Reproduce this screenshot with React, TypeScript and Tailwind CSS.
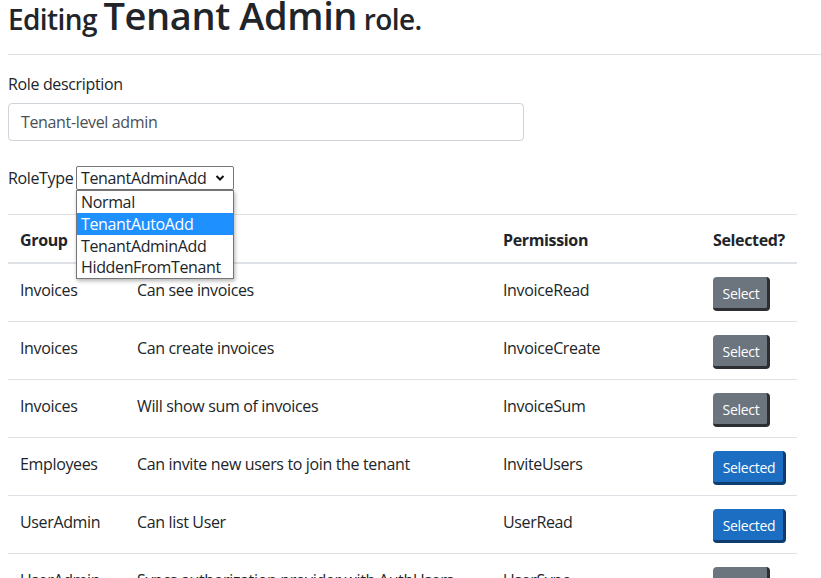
import React from "react";

const rows = [
  { g: "Invoices", d: "Can see invoices", p: "InvoiceRead", s: false },
  { g: "Invoices", d: "Can create invoices", p: "InvoiceCreate", s: false },
  { g: "Invoices", d: "Will show sum of invoices", p: "InvoiceSum", s: false },
  { g: "Employees", d: "Can invite new users to join the tenant", p: "InviteUsers", s: true },
  { g: "UserAdmin", d: "Can list User", p: "UserRead", s: true },
  { g: "UserAdmin", d: "Syncs authorization provider with AuthUsers", p: "UserSync", s: false },
];

export default function App() {
  return (
    <div
      className="h-[578px] w-[821px] overflow-hidden bg-white pl-2 text-[#212529]"
      style={{ fontFamily: '"Segoe UI", "Open Sans", "Noto Sans", sans-serif' }}
    >
      <h1 className="text-[28px] font-semibold leading-[30px] tracking-[-0.6px]">
        Editing <span className="text-[38px] tracking-[-0.4px]">Tenant Admin</span> role.
      </h1>
      <div className="mt-[20px] h-px bg-[#e2e2e2]" />
      <div className="tracking-[-0.35px]">
        <div className="mt-[17px] text-[16px] leading-6">Role description</div>
        <div className="mt-[7px] flex h-[38px] w-[516px] items-center rounded border border-[#ced4da] px-3 text-[16px] text-[#495057]">
          Tenant-level admin
        </div>
        <div className="relative mt-[25px] flex items-center text-[16px]">
          <span className="w-[68px] shrink-0 whitespace-nowrap leading-6">RoleType</span>
          <div className="flex h-[24px] w-[158px] items-center justify-between rounded-[2px] border border-[#767676] pl-[4px] pr-[8px] leading-5">
            <span>TenantAdminAdd</span>
            <svg width="10" height="8" viewBox="0 0 10 8">
              <path d="M1.5 2 L5 5.5 L8.5 2" fill="none" stroke="#111" strokeWidth="2" />
            </svg>
          </div>
          <div className="absolute left-[68px] top-[24px] z-10 w-[158px] border border-[#767676] bg-white shadow-[1px_2px_4px_rgba(0,0,0,0.3)]">
            <div className="h-[22px] px-[4px] leading-[22px]">Normal</div>
            <div className="h-[22px] bg-[#1e90ff] px-[4px] leading-[22px] text-white">TenantAutoAdd</div>
            <div className="h-[22px] px-[4px] leading-[22px]">TenantAdminAdd</div>
            <div className="h-[21px] px-[4px] leading-[21px]">HiddenFromTenant</div>
          </div>
        </div>
        <div className="mt-[24px] w-[789px] text-[16px]">
          <div className="flex h-[50px] border-t border-b-2 border-[#dee2e6] font-bold">
            <div className="w-[117px] shrink-0 px-3 pb-3 pt-[13px] leading-6">Group</div>
            <div className="w-[366px] shrink-0 px-3 pb-3 pt-[13px] leading-6">Description</div>
            <div className="w-[210px] shrink-0 px-3 pb-3 pt-[13px] leading-6">Permission</div>
            <div className="shrink-0 px-3 pb-3 pt-[13px] leading-6">Selected?</div>
          </div>
          {rows.map((r, i) => (
            <div key={i} className="flex h-[58px] border-b border-[#dee2e6]">
              <div className="w-[117px] shrink-0 px-3 pb-3 pt-[14px] leading-6">{r.g}</div>
              <div className="w-[366px] shrink-0 px-3 pb-3 pt-[14px] leading-6">{r.d}</div>
              <div className="w-[210px] shrink-0 px-3 pb-3 pt-[14px] leading-6">{r.p}</div>
              <div className="shrink-0 px-3 pt-[13px]">
                {r.s ? (
                  <div className="flex h-[34px] w-[73px] items-center justify-center rounded border-b-[3px] border-r-[3px] border-[#0f3d6e] bg-[#1b6ec2] pl-[2px] pt-[2px] text-[14px] tracking-[-0.3px] text-white">
                    Selected
                  </div>
                ) : (
                  <div className="flex h-[34px] w-[57px] items-center justify-center rounded border-b-[3px] border-r-[3px] border-[#2b2f33] bg-[#6c757d] pl-[2px] pt-[2px] text-[14px] tracking-[-0.3px] text-white">
                    Select
                  </div>
                )}
              </div>
            </div>
          ))}
        </div>
      </div>
    </div>
  );
}
